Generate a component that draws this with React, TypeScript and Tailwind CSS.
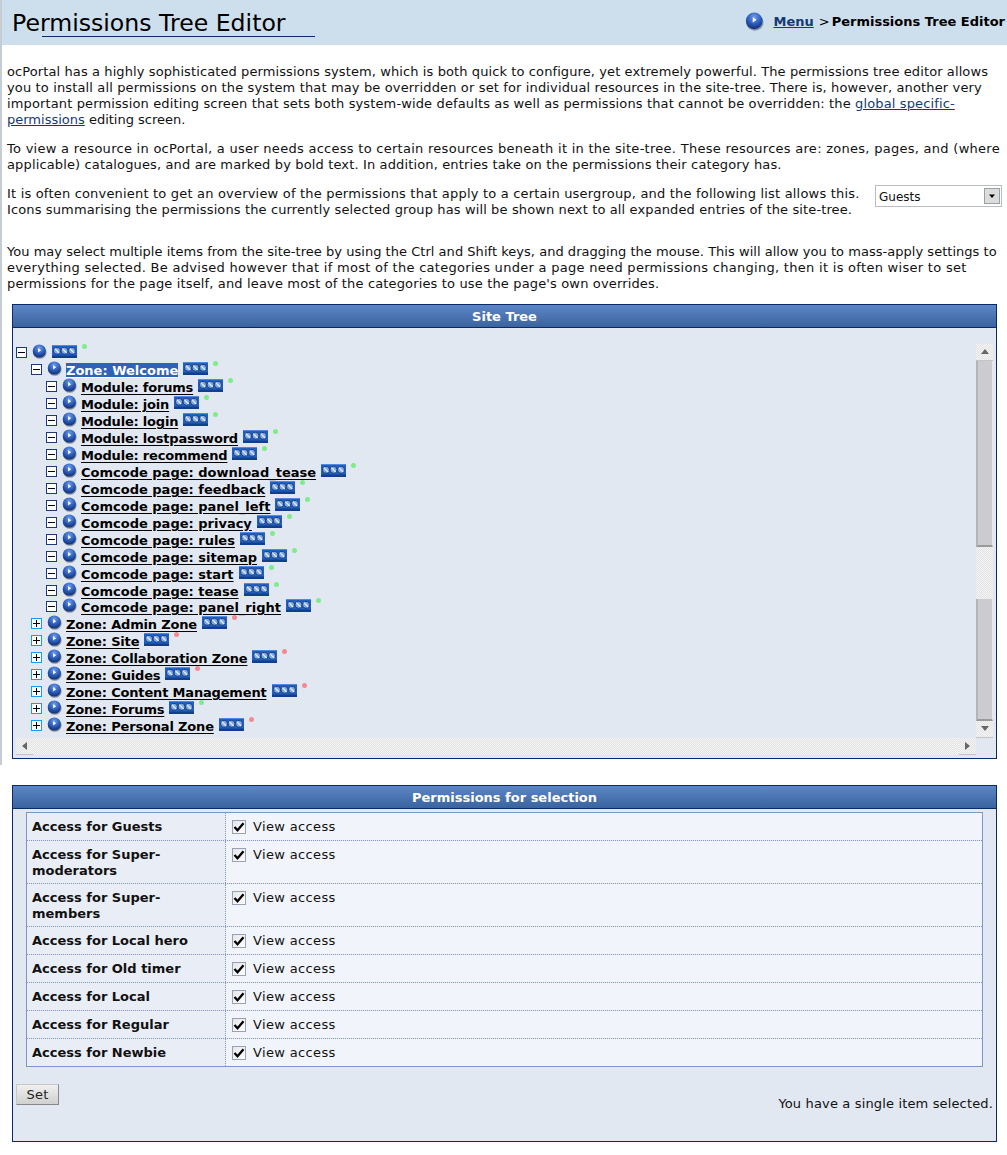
function Ball({ size = 15 }: { size?: number }) {
  return (
    <svg width={size} height={size} viewBox="0 0 15 15" className="shrink-0">
      <defs>
        <radialGradient id="ball" cx="50%" cy="28%" r="75%">
          <stop offset="0%" stopColor="#6f9ce8" />
          <stop offset="55%" stopColor="#2a5cba" />
          <stop offset="100%" stopColor="#0f2a66" />
        </radialGradient>
      </defs>
      <ellipse cx="7.8" cy="8.4" rx="6.8" ry="6.4" fill="#8b95a6" />
      <circle cx="7.3" cy="7" r="6.6" fill="url(#ball)" />
      <path d="M6.1 4v4.4l3-2.2z" fill="#fff" />
    </svg>
  );
}

function Badge() {
  return (
    <svg width="25" height="13" viewBox="0 0 25 13" className="shrink-0">
      <rect x="0" y="0" width="25" height="13" rx="1" fill="#2160c0" />
      <rect x="0" y="0" width="25" height="1" fill="#4f8ae0" />
      <rect x="0" y="10.5" width="25" height="2.5" fill="#123f8c" />
      {[5, 12.5, 20].map((cx) => (
        <g key={cx}>
          <circle cx={cx} cy="5.8" r="3.5" fill="#7fa9e4" stroke="#0e2f70" strokeWidth="0.8" />
          <path d={`M${cx - 2.2} ${3.6}l4.4 4.4`} stroke="#e6f0fc" strokeWidth="1.2" />
        </g>
      ))}
    </svg>
  );
}

function Toggle({ open }: { open: boolean }) {
  return (
    <span
      className={
        open
          ? 'flex h-[11px] w-[11px] shrink-0 items-center justify-center border border-[#1b3a78] bg-white'
          : 'flex h-[11px] w-[11px] shrink-0 items-center justify-center border border-[#1a9bf0] bg-white'
      }
    >
      <svg width="9" height="9" viewBox="0 0 9 9">
        <path d={open ? 'M1 4.5h7' : 'M1 4.5h7M4.5 1v7'} stroke="#000" strokeWidth="1" />
      </svg>
    </span>
  );
}

type Node = { label: string; level: number; open: boolean; dot: 'green' | 'red'; selected?: boolean };

const pages = [
  'Module: forums', 'Module: join', 'Module: login', 'Module: lostpassword', 'Module: recommend',
  'Comcode page: download_tease', 'Comcode page: feedback', 'Comcode page: panel_left',
  'Comcode page: privacy', 'Comcode page: rules', 'Comcode page: sitemap', 'Comcode page: start',
  'Comcode page: tease', 'Comcode page: panel_right',
];

const nodes: Node[] = [
  { label: 'Zone: Welcome', level: 1, open: true, dot: 'green', selected: true },
  ...pages.map((label): Node => ({ label, level: 2, open: true, dot: 'green' })),
  { label: 'Zone: Admin Zone', level: 1, open: false, dot: 'red' },
  { label: 'Zone: Site', level: 1, open: false, dot: 'red' },
  { label: 'Zone: Collaboration Zone', level: 1, open: false, dot: 'red' },
  { label: 'Zone: Guides', level: 1, open: false, dot: 'red' },
  { label: 'Zone: Content Management', level: 1, open: false, dot: 'red' },
  { label: 'Zone: Forums', level: 1, open: false, dot: 'green' },
  { label: 'Zone: Personal Zone', level: 1, open: false, dot: 'red' },
];

const groups = [
  { name: ['Access for Guests'], h: 'h-[27px]' },
  { name: ['Access for Super-', 'moderators'], h: 'h-[43px]' },
  { name: ['Access for Super-', 'members'], h: 'h-[43px]' },
  { name: ['Access for Local hero'], h: 'h-[28px]' },
  { name: ['Access for Old timer'], h: 'h-[28px]' },
  { name: ['Access for Local'], h: 'h-[28px]' },
  { name: ['Access for Regular'], h: 'h-[28px]' },
  { name: ['Access for Newbie'], h: 'h-[28px]' },
];

function Dot({ color }: { color: 'green' | 'red' }) {
  return (
    <span
      className={
        color === 'green'
          ? 'mb-[12px] ml-[5px] h-[5px] w-[5px] rounded-full bg-[#7dec8a]'
          : 'mb-[12px] ml-[5px] h-[5px] w-[5px] rounded-full bg-[#f58a94]'
      }
    />
  );
}

function labelClass(node: Node) {
  if (node.selected) return 'ml-[4px] mt-[2px] bg-[#2f62b8] text-[13px] leading-[15px] font-bold text-white underline underline-offset-2';
  const base = 'ml-[4px] mt-[2px] text-[13px] leading-[15px] font-bold text-black underline underline-offset-2';
  if (node.label.startsWith('Module')) return `${base} tracking-[-0.2px]`;
  if (node.label.startsWith('Zone')) return `${base} tracking-[-0.17px]`;
  return base;
}

function TreeRow({ node }: { node: Node }) {
  const tight = node.label === 'Comcode page: panel_right';
  return (
    <div
      className={
        (node.level === 1 ? 'flex h-[17px] items-center pl-[15px]' : 'flex h-[17px] items-center pl-[30px]') +
        (tight ? ' -mt-[1px]' : '')
      }
    >
      <Toggle open={node.open} />
      <span className="ml-[5px] mb-[3px]"><Ball /></span>
      <span className={labelClass(node)}>{node.label}</span>
      <span className="mb-[3px] ml-[5px]"><Badge /></span>
      <Dot color={node.dot} />
    </div>
  );
}

function PanelTitle({ children }: { children: string }) {
  return (
    <div className="flex h-[23px] items-center justify-center border-b border-[#0b2a68] bg-gradient-to-b from-[#5d86c6] to-[#3a649f] pt-[1px] text-[13px] font-bold text-white">
      {children}
    </div>
  );
}

function Arrow({ dir }: { dir: 'up' | 'down' | 'left' | 'right' }) {
  const d = { up: 'M1 7l4-5 4 5z', down: 'M1 2l4 5 4-5z', left: 'M7 1l-5 4 5 4z', right: 'M2 1l5 4-5 4z' }[dir];
  return (
    <span className="flex h-[17px] w-[17px] shrink-0 items-center justify-center border-b border-[#c4c4c4] bg-[repeating-conic-gradient(#e2e2e2_0_25%,#f5f5f5_0_50%)] bg-[length:2px_2px]">
      <svg width="10" height="10" viewBox="0 0 10 10"><path d={d} fill="#666" /></svg>
    </span>
  );
}

function Check() {
  return (
    <span className="flex h-[14px] w-[14px] shrink-0 items-center justify-center border border-[#98a2b4] bg-gradient-to-br from-[#e4e6ea] to-white">
      <svg width="12" height="12" viewBox="0 0 12 12" className="shrink-0">
        <path d="M1.5 6l3 3.2 6-7" fill="none" stroke="#000" strokeWidth="2.3" />
      </svg>
    </span>
  );
}

export default function App() {
  return (
    <div className="h-[1155px] w-[1007px] overflow-hidden bg-white font-['DejaVu_Sans',Verdana,sans-serif] text-[13px] leading-[16px] text-[#111]">
      <div className="h-[765px] border-l-2 border-[#c4ccd4]">
        <header className="flex h-[45px] justify-between bg-[#cddeed] pr-[2px]">
          <h1 className="relative mt-[9px] ml-[10px] h-[28px] self-start text-[23.6px] leading-[28px] font-normal text-black">
            Permissions Tree Editor
            <span className="absolute top-[27px] left-[30px] h-px w-[273px] bg-[#0b2a68]" />
          </h1>
          <div className="flex items-center pb-[2px] text-[13px] font-bold text-black">
            <Ball size={19} />
            <a className="ml-[9px] text-[#133a76] underline">Menu</a>
            <span className="mr-[2px] ml-[5px] font-normal">&gt;</span>
            <span>Permissions Tree Editor</span>
          </div>
        </header>

        <div className="pt-[19px] pr-[4px] pl-[5px]">
          <p className="whitespace-nowrap">
            <span className="block tracking-[0.1px]">ocPortal has a highly sophisticated permissions system, which is both quick to configure, yet extremely powerful. The permissions tree editor allows</span>
            <span className="block tracking-[0.14px]">you to install all permissions on the system that may be overridden or set for individual resources in the site-tree. There is, however, another very</span>
            <span className="block tracking-[0.13px]">important permission editing screen that sets both system-wide defaults as well as permissions that cannot be overridden: the <a className="text-[#133a76] underline">global specific-</a></span>
            <span className="block"><a className="text-[#133a76] underline">permissions</a> editing screen.</span>
          </p>
          <p className="mt-[13px] whitespace-nowrap">
            <span className="block tracking-[0.275px]">To view a resource in ocPortal, a user needs access to certain resources beneath it in the site-tree. These resources are: zones, pages, and (where</span>
            <span className="block tracking-[0.14px]">applicable) catalogues, and are marked by bold text. In addition, entries take on the permissions their category has.</span>
          </p>
          <div className="mt-[13px] flex items-start justify-between">
            <p className="whitespace-nowrap">
              <span className="block tracking-[0.19px]">It is often convenient to get an overview of the permissions that apply to a certain usergroup, and the following list allows this.</span>
              <span className="block tracking-[0.125px]">Icons summarising the permissions the currently selected group has will be shown next to all expanded entries of the site-tree.</span>
            </p>
            <div className="-mt-[1px] mr-[1px] flex h-[22px] w-[127px] items-center justify-between border border-[#b8bcc4] bg-white pr-[1px] pl-[3px] text-[12px]">
              <span className="mt-[1px]">Guests</span>
              <span className="flex h-[16px] w-[16px] items-center justify-center border border-[#9aa0a8] bg-[#dcdcdc]">
                <svg width="8" height="8" viewBox="0 0 8 8"><path d="M1 2.5h6l-3 3.5z" fill="#000" /></svg>
              </span>
            </div>
          </div>
          <p className="mt-[26px] whitespace-nowrap">
            <span className="block tracking-[0.03px]">You may select multiple items from the site-tree by using the Ctrl and Shift keys, and dragging the mouse. This will allow you to mass-apply settings to</span>
            <span className="block tracking-[0.29px]">everything selected. Be advised however that if most of the categories under a page need permissions changing, then it is often wiser to set</span>
            <span className="block tracking-[0.15px]">permissions for the page itself, and leave most of the categories to use the page's own overrides.</span>
          </p>
        </div>

        <section className="mt-[12px] ml-[10px] h-[455px] w-[985px] border border-[#0b2a68] bg-[#e2e8f2]">
          <PanelTitle>Site Tree</PanelTitle>
          <div className="flex pt-[16px] pr-[3px] pl-[3px]">
            <div className="min-w-0 flex-1">
              <div className="flex h-[394px] flex-col">
                <div className="flex h-[17px] items-center">
                  <Toggle open />
                  <span className="mb-[3px] ml-[5px]"><Ball /></span>
                  <span className="mb-[3px] ml-[5px]"><Badge /></span>
                  <Dot color="green" />
                </div>
                {nodes.map((node) => <TreeRow key={node.label} node={node} />)}
              </div>
              <div className="flex h-[17px] justify-between bg-[repeating-conic-gradient(#e2e2e2_0_25%,#f5f5f5_0_50%)] bg-[length:2px_2px]">
                <Arrow dir="left" />
                <Arrow dir="right" />
              </div>
            </div>
            <div className="flex h-[394px] w-[17px] flex-col">
              <Arrow dir="up" />
              <div className="flex flex-1 flex-col bg-[repeating-conic-gradient(#e2e2e2_0_25%,#f5f5f5_0_50%)] bg-[length:2px_2px]">
                <div className="h-[186px] border-r border-b-2 border-l-2 border-r-[#e8e8e8] border-b-[#9a9a9a] border-l-[#b4b4b4] bg-[#cbcbd0]" />
                <div className="mt-[52px] h-[122px] border-r border-b-2 border-l-2 border-r-[#e8e8e8] border-b-[#9a9a9a] border-l-[#b4b4b4] bg-[#cbcbd0]" />
              </div>
              <Arrow dir="down" />
            </div>
          </div>
        </section>
      </div>

      <section className="mt-[20px] ml-[12px] h-[357px] w-[985px] border border-[#0b2a68] bg-[#e2e8f2]">
        <PanelTitle>Permissions for selection</PanelTitle>
        <div className="mx-[13px] mt-[3px] w-[957px] border border-[#7d97c4]">
          {groups.map((g, i) => (
            <div
              key={g.name[0]}
              className={i === 0 ? `flex ${g.h}` : `flex ${g.h} border-t border-dotted border-[#8a98c0]`}
            >
              <div className="w-[199px] border-r border-dotted border-[#8a98c0] bg-[#e9edf6] pt-[6px] pl-[5px] leading-[16px] font-bold text-[#111]">
                {g.name.map((line) => <div key={line}>{line}</div>)}
              </div>
              <div className="flex flex-1 items-start gap-[7px] bg-[#f1f4fa] pt-[7px] pl-[6px]">
                <Check />
                <span className="-mt-[1px] tracking-[0.35px]">View access</span>
              </div>
            </div>
          ))}
        </div>
        <div className="mt-[17px] flex items-start justify-between pr-[3px] pl-[3px]">
          <button className="h-[21px] w-[43px] border border-[#c8c8c8] border-r-[#888] border-b-[#888] bg-gradient-to-b from-[#f0f0f0] to-[#d0d0d0] text-[13px] tracking-[0.3px] text-[#222]">Set</button>
          <span className="mt-[12px] tracking-[0.15px]">You have a single item selected.</span>
        </div>
      </section>
    </div>
  );
}
